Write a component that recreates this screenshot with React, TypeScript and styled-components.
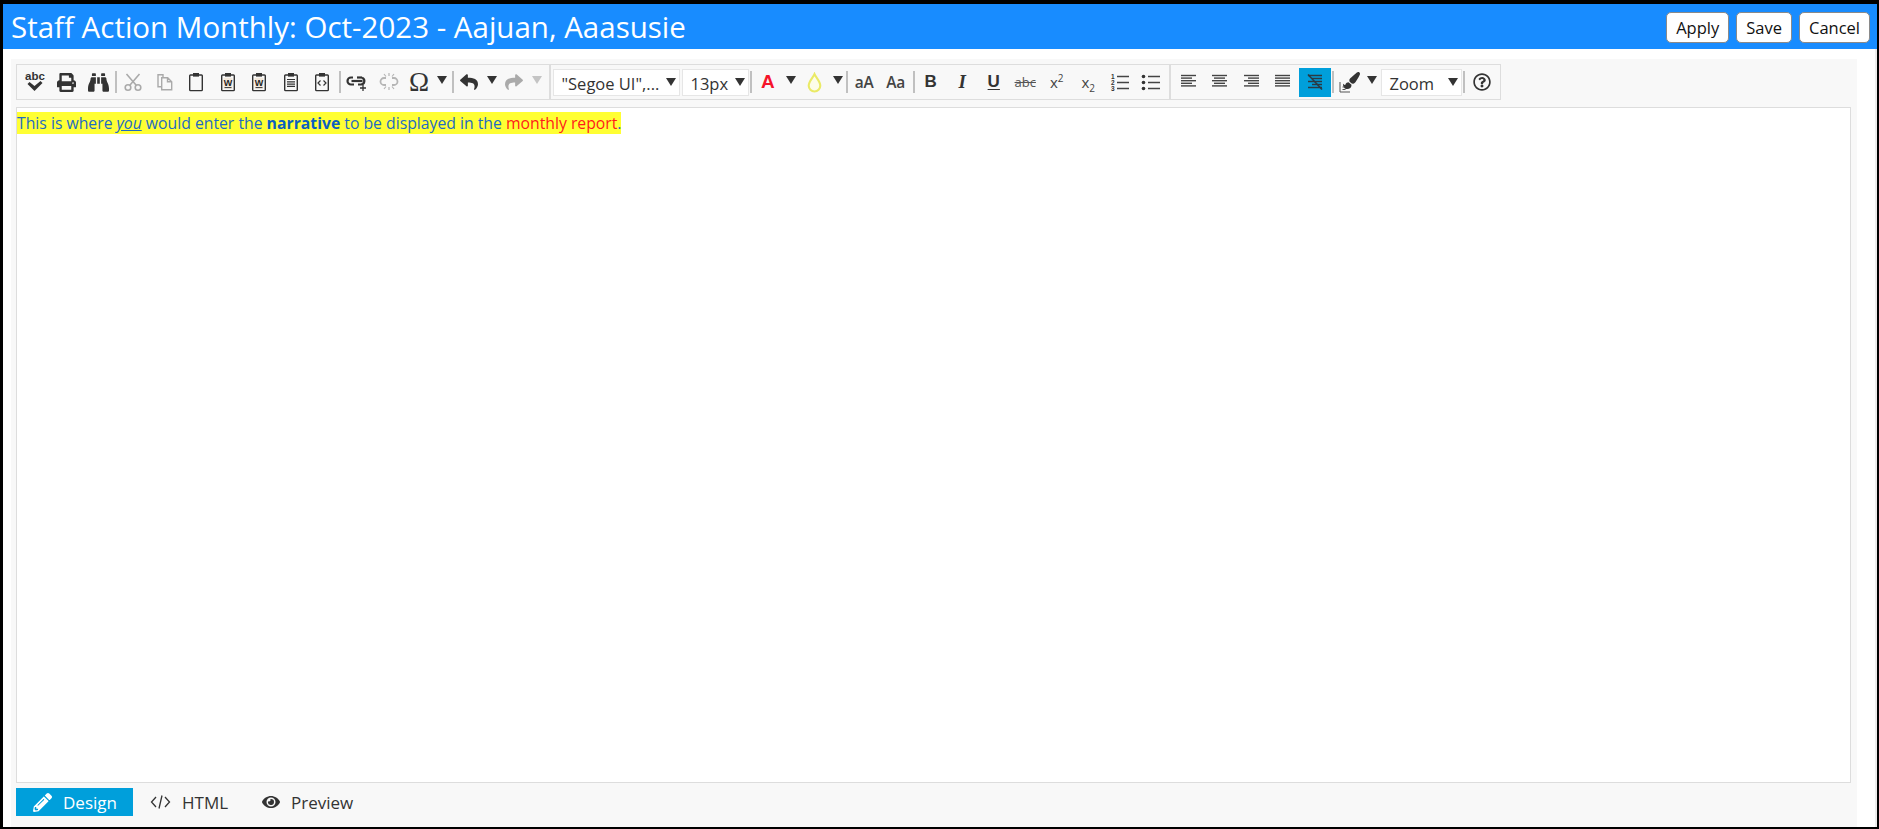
import React from 'react';
import styled, {createGlobalStyle} from "styled-components";
import {FaBinoculars, FaEye, FaPaintBrush, FaPencilAlt, FaPrint, FaRegQuestionCircle, FaReply, FaShare} from "react-icons/fa";

const FONT = `"Open Sans", "Noto Sans", "Liberation Sans", sans-serif`;

const GlobalStyle = createGlobalStyle`
    html, body {
        margin: 0;
        height: 100%;
        background: #000;
        font-family: ${FONT};
    }
`

const Clipboard = ({children}: { children?: React.ReactNode }) => (
    <svg width="18" height="20" viewBox="0 0 18 20" fill="none" stroke="#333" strokeWidth="1.4">
        <rect x="2.7" y="3" width="12.6" height="15.6" rx="0.8"/>
        <rect x="6" y="1" width="6" height="3.6" fill="#333" stroke="none"/>
        {children}
    </svg>
)

const WordMark = () => (
    <>
        <rect x="4.6" y="5.8" width="8.8" height="10.8" fill="#f3e9dc" stroke="none"/>
        <text x="9" y="14" fontSize="9" fontWeight="700" fill="#222" stroke="none" textAnchor="middle"
              fontFamily="Liberation Sans">W</text>
        <path d="M5.5 15.6h7" strokeWidth="1"/>
    </>
)

const Lines = ({rows}: { rows: [number, number][] }) => (
    <svg width="18" height="16" viewBox="0 0 18 16" stroke="#444" strokeWidth="1.4">
        {rows.map(([x, w], i) => <line key={i} x1={x} x2={x + w} y1={1.5 + i * 2.6} y2={1.5 + i * 2.6}/>)}
    </svg>
)

const alignLeft: [number, number][] = [[1, 15], [1, 11], [1, 15], [1, 11], [1, 15]];
const alignCenter: [number, number][] = [[1, 15], [3, 11], [1, 15], [3, 11], [1, 15]];
const alignRight: [number, number][] = [[1, 15], [5, 11], [1, 15], [5, 11], [1, 15]];
const alignFull: [number, number][] = [[1, 15], [1, 15], [1, 15], [1, 15], [1, 15]];

export default function App() {
    return (
        <Frame>
            <GlobalStyle/>
            <Header>
                <Title>Staff Action Monthly: Oct-2023 - Aajuan, Aaasusie</Title>
                <Actions>
                    <ActionButton>Apply</ActionButton>
                    <ActionButton>Save</ActionButton>
                    <ActionButton>Cancel</ActionButton>
                </Actions>
            </Header>
            <Body>
                <Panel>
                    <Toolbar>
                        <ToolButton>
                            <svg width="24" height="24" viewBox="0 0 24 24">
                                <text x="12" y="9.5" fontSize="11.5" fontWeight="700" fill="#333" textAnchor="middle"
                                      fontFamily="Liberation Sans">abc</text>
                                <path d="M4.5 14l2-2 5 4 6-5 2 2-8 8z" fill="#333"/>
                            </svg>
                        </ToolButton>
                        <ToolButton><FaPrint size={19} color="#333"/></ToolButton>
                        <ToolButton><FaBinoculars size={21} color="#333"/></ToolButton>
                        <Separator/>
                        <ToolButton>
                            <svg width="20" height="20" viewBox="0 0 20 20" fill="none" stroke="#aaa" strokeWidth="1.6">
                                <circle cx="5" cy="15.5" r="2.8"/>
                                <circle cx="15" cy="15.5" r="2.8"/>
                                <path d="M6.8 13.3L16.5 2M13.2 13.3L3.5 2"/>
                            </svg>
                        </ToolButton>
                        <ToolButton>
                            <svg width="20" height="20" viewBox="0 0 20 20" fill="none" stroke="#aaa" strokeWidth="1.4">
                                <path d="M8 5V2.7h-5v12h3"/>
                                <path d="M6.7 5.7h6l4 4v8h-10zM12.5 5.7v4h4"/>
                            </svg>
                        </ToolButton>
                        <ToolButton><Clipboard/></ToolButton>
                        <ToolButton><Clipboard><WordMark/></Clipboard></ToolButton>
                        <ToolButton><Clipboard><WordMark/></Clipboard></ToolButton>
                        <ToolButton>
                            <Clipboard>
                                <path d="M5 7.5h8M5 9.8h8M5 12.1h8M5 14.4h8" strokeWidth="1.2"/>
                            </Clipboard>
                        </ToolButton>
                        <ToolButton>
                            <Clipboard>
                                <path d="M7.5 8.5L5 11l2.5 2.5M10.5 8.5L13 11l-2.5 2.5" strokeWidth="1.2"/>
                            </Clipboard>
                        </ToolButton>
                        <Separator/>
                        <ToolButton>
                            <svg width="22" height="20" viewBox="0 0 22 20" fill="none" stroke="#333" strokeWidth="2.2">
                                <path d="M7 5.5H5a3.5 3.5 0 0 0 0 7h3M12 12.5h3a3.5 3.5 0 0 0 1-6.8"/>
                                <path d="M5.5 9h11"/>
                                <path d="M11 5.5h5"/>
                                <path d="M17 13v6M14 16h6" strokeWidth="1.3"/>
                            </svg>
                        </ToolButton>
                        <ToolButton>
                            <svg width="22" height="20" viewBox="0 0 22 20" fill="none" stroke="#b5b5b5" strokeWidth="1.8">
                                <path d="M8 6H6a3.5 3.5 0 0 0 0 7h2M14 6h2a3.5 3.5 0 0 1 0 7h-2"/>
                                <path d="M11 1v3M11 15v3M6 2l2 2.5M16 2l-2 2.5M6 17l2-2.5M16 17l-2-2.5" strokeWidth="1.2"/>
                            </svg>
                        </ToolButton>
                        <ToolButton $w={29}><Omega>Ω</Omega></ToolButton>
                        <Caret $w={17}/>
                        <Separator/>
                        <ToolButton $w={30}><FaReply size={18} color="#333"/></ToolButton>
                        <Caret/>
                        <ToolButton $w={30}><FaShare size={18} color="#aaa"/></ToolButton>
                        <Caret $off/>
                        <GroupDivider/>
                        <Select $w={127}>"Segoe UI",...<SelectArrow/></Select>
                        <Select $w={67} $gap>13px<SelectArrow/></Select>
                        <Separator/>
                        <ToolButton><GlyphA>A</GlyphA></ToolButton>
                        <Caret/>
                        <ToolButton>
                            <svg width="17" height="21" viewBox="0 0 16 20" fill="#fdfde8" stroke="#eaea66" strokeWidth="2">
                                <path d="M8 2c1.5 3.5 5.500 7 5.500 11a5.500 5.500 0 0 1-11 0C2.500 9 6.500 5.500 8 2z"/>
                            </svg>
                        </ToolButton>
                        <Caret/>
                        <Separator/>
                        <ToolButton><CaseGlyph>aA</CaseGlyph></ToolButton>
                        <ToolButton><CaseGlyph>Aa</CaseGlyph></ToolButton>
                        <Separator/>
                        <ToolButton><StyleGlyph $bold>B</StyleGlyph></ToolButton>
                        <ToolButton><ItalicGlyph>I</ItalicGlyph></ToolButton>
                        <ToolButton><StyleGlyph $bold $under>U</StyleGlyph></ToolButton>
                        <ToolButton><StrikeGlyph>abc</StrikeGlyph></ToolButton>
                        <ToolButton><ScriptGlyph>x<sup>2</sup></ScriptGlyph></ToolButton>
                        <ToolButton><ScriptGlyph>x<sub>2</sub></ScriptGlyph></ToolButton>
                        <ToolButton>
                            <svg width="20" height="18" viewBox="0 0 20 18" stroke="#444" strokeWidth="1.4">
                                <text x="1" y="5.5" fontSize="6.5" fontWeight="700" fill="#333" stroke="none" fontFamily="Liberation Sans">1</text>
                                <text x="1" y="11.5" fontSize="6.5" fontWeight="700" fill="#333" stroke="none" fontFamily="Liberation Sans">2</text>
                                <text x="1" y="17.5" fontSize="6.5" fontWeight="700" fill="#333" stroke="none" fontFamily="Liberation Sans">3</text>
                                <path d="M7 3.5h12M7 9.5h12M7 15.5h12"/>
                            </svg>
                        </ToolButton>
                        <ToolButton>
                            <svg width="20" height="18" viewBox="0 0 20 18" stroke="#444" strokeWidth="1.4" fill="#333">
                                <circle cx="2.5" cy="3.5" r="1.8" stroke="none"/>
                                <circle cx="2.5" cy="9.5" r="1.8" stroke="none"/>
                                <circle cx="2.5" cy="15.5" r="1.8" stroke="none"/>
                                <path d="M7 3.5h12M7 9.5h12M7 15.5h12"/>
                            </svg>
                        </ToolButton>
                        <GroupDivider $tight/>
                        <ToolButton><Lines rows={alignLeft}/></ToolButton>
                        <ToolButton><Lines rows={alignCenter}/></ToolButton>
                        <ToolButton><Lines rows={alignRight}/></ToolButton>
                        <ToolButton><Lines rows={alignFull}/></ToolButton>
                        <ToolButton $active>
                            <svg width="18" height="18" viewBox="0 0 18 18" stroke="#2a3a44" strokeWidth="1.4">
                                <path d="M2 2.5h14M6 5.5h10M2 8.5h14M6 11.5h10M2 14.5h14"/>
                                <path d="M2 1.500L16 16.5" strokeWidth="1.6"/>
                            </svg>
                        </ToolButton>
                        <Separator/>
                        <ToolButton>
                            <BrushIcon>
                                <FaPaintBrush size={17} color="#333"/>
                                <svg width="12" height="12" viewBox="0 0 12 12" fill="none" stroke="#555" strokeWidth="1">
                                    <path d="M1 1v10h10M3.5 8.5h3M3.5 6h2"/>
                                </svg>
                            </BrushIcon>
                        </ToolButton>
                        <Caret $w={13}/>
                        <Select $w={81} $gap>Zoom<SelectArrow/></Select>
                        <Separator/>
                        <ToolButton $w={33}><FaRegQuestionCircle size={18} color="#333"/></ToolButton>
                    </Toolbar>
                    <Editor>
                        <Highlight>
                            This is where <Emphasis>you</Emphasis> would enter the <strong>narrative</strong> to be
                            displayed in the <RedText>monthly report</RedText>.
                        </Highlight>
                    </Editor>
                    <Tabs>
                        <Tab $active $w={117}><FaPencilAlt size={19}/>Design</Tab>
                        <Tab $w={112}>
                            <svg width="21" height="16" viewBox="0 0 21 16" fill="none" stroke="#333" strokeWidth="1.3">
                                <path d="M6 3L1.5 8 6 13M15 3l4.5 5L15 13M12 1.5L9 14.5"/>
                            </svg>
                            HTML
                        </Tab>
                        <Tab $w={130}><FaEye size={18} color="#333"/>Preview</Tab>
                    </Tabs>
                </Panel>
            </Body>
        </Frame>
    );
}

const Frame = styled.div`
    box-sizing: border-box;
    height: 100vh;
    padding: 4px 3px 2px 3px;
    display: flex;
    flex-direction: column;
`
const Header = styled.header`
    height: 45px;
    margin-right: -1px;
    padding: 0 7px 0 8px;
    background: #188cff;
    display: flex;
    align-items: center;
    justify-content: space-between;
    flex-shrink: 0;
`
const Title = styled.h1`
    margin: 0;
    font-size: 29.5px;
    font-weight: 400;
    color: #fff;
    white-space: nowrap;
`
const Actions = styled.div`
    display: flex;
    gap: 7px;
    padding-top: 1px;
`
const ActionButton = styled.button`
    box-sizing: border-box;
    height: 31px;
    padding: 0 9px;
    background: #fff;
    border: 1px solid #8a8a8a;
    border-radius: 5px;
    font-family: ${FONT};
    font-size: 16.5px;
    color: #111;
`
const Body = styled.main`
    flex: 1;
    min-height: 0;
    background: #fff;
    padding: 10px 18px 0 8px;
    margin-right: -1px;
    border-right: 2px solid #ececec;
    display: flex;
`
const Panel = styled.section`
    flex: 1;
    min-width: 0;
    background: #f8f8f8;
    padding: 5px 6px 0 5px;
    display: flex;
    flex-direction: column;
`
const Toolbar = styled.div`
    box-sizing: border-box;
    width: fit-content;
    height: 36px;
    border: 1px solid #ddd;
    padding: 0 1.5px 0 2.5px;
    display: flex;
    align-items: center;
    flex-shrink: 0;
`
const ToolButton = styled.div<{ $w?: number; $active?: boolean }>`
    width: ${props => props.$w ?? 31.5}px;
    height: 29px;
    display: flex;
    align-items: center;
    justify-content: center;
    flex-shrink: 0;
    background: ${props => props.$active ? "#009fdb" : "transparent"};
`
const Caret = styled.span<{ $w?: number; $off?: boolean }>`
    width: ${props => props.$w ?? 15}px;
    height: 29px;
    flex-shrink: 0;
    display: flex;
    align-items: center;
    justify-content: center;
    padding-bottom: 4px;
    box-sizing: border-box;

    &::after {
        content: "";
        border-left: 5px solid transparent;
        border-right: 5px solid transparent;
        border-top: 8px solid ${props => props.$off ? "#c4c4c4" : "#333"};
    }
`
const Separator = styled.span`
    width: 3.5px;
    height: 22px;
    flex-shrink: 0;
    box-sizing: border-box;
    border-left: 1px solid #888;
    transform: translateX(1.5px);
`
const GroupDivider = styled.span<{ $tight?: boolean }>`
    width: 2px;
    height: 34px;
    flex-shrink: 0;
    background: #ddd;
    margin: 0 2px 0 ${props => props.$tight ? 2 : 4.5}px;
`
const Select = styled.div<{ $w: number; $gap?: boolean }>`
    box-sizing: border-box;
    width: ${props => props.$w}px;
    height: 27px;
    flex-shrink: 0;
    margin-left: ${props => props.$gap ? 2 : 0}px;
    padding: 2px 3px 0 8px;
    background: #fff;
    border: 1px solid #e6e6e6;
    display: flex;
    align-items: center;
    justify-content: space-between;
    font-size: 16.5px;
    color: #333;
    white-space: nowrap;
`
const SelectArrow = styled.span`
    border-left: 5px solid transparent;
    border-right: 5px solid transparent;
    border-top: 8px solid #333;
    flex-shrink: 0;
    margin-bottom: 2px;
`
const Omega = styled.span`
    font-family: "Liberation Serif", serif;
    font-size: 27px;
    line-height: 1;
    color: #333;
`
const GlyphA = styled.span`
    font-family: "Liberation Sans", sans-serif;
    font-size: 19px;
    font-weight: 700;
    color: #f5142a;
`
const CaseGlyph = styled.span`
    font-size: 15.5px;
    font-weight: 600;
    color: #444;
`
const StyleGlyph = styled.span<{ $bold?: boolean; $under?: boolean }>`
    font-family: "Liberation Sans", sans-serif;
    font-size: 17px;
    font-weight: ${props => props.$bold ? 700 : 400};
    text-decoration: ${props => props.$under ? "underline" : "none"};
    text-underline-offset: 2px;
    color: #333;
`
const ItalicGlyph = styled.span`
    font-family: "Liberation Serif", serif;
    font-size: 19px;
    font-weight: 700;
    font-style: italic;
    color: #333;
`
const StrikeGlyph = styled.span`
    font-size: 13px;
    text-decoration: line-through;
    color: #555;
`
const ScriptGlyph = styled.span`
    font-size: 15px;
    color: #444;
    line-height: 1;

    sup, sub {
        font-size: 10px;
        line-height: 0;
    }
`
const BrushIcon = styled.span`
    position: relative;
    width: 21px;
    height: 21px;

    svg:first-child {
        position: absolute;
        right: 0;
        top: 0;
    }

    svg:last-child {
        position: absolute;
        left: 0;
        bottom: 0;
    }
`
const Editor = styled.div`
    flex: 1;
    min-height: 0;
    margin-top: 7px;
    background: #fff;
    border: 1px solid #ddd;
    padding-top: 4px;
    font-size: 15.76px;
    line-height: 22px;
`
const Highlight = styled.span`
    background: #ffff33;
    color: #1e6bc4;

    strong {
        color: #0b5fc0;
    }
`
const Emphasis = styled.em`
    text-decoration: underline;
`
const RedText = styled.span`
    color: #ff1a1a;
`
const Tabs = styled.nav`
    display: flex;
    margin: 5px 0 11px;
    flex-shrink: 0;
`
const Tab = styled.div<{ $active?: boolean; $w: number }>`
    box-sizing: border-box;
    width: ${props => props.$w}px;
    height: 28px;
    padding-left: 17px;
    display: flex;
    align-items: center;
    gap: 11px;
    font-size: 17px;
    color: ${props => props.$active ? "#fff" : "#333"};
    background: ${props => props.$active ? "#009fdb" : "transparent"};
`
